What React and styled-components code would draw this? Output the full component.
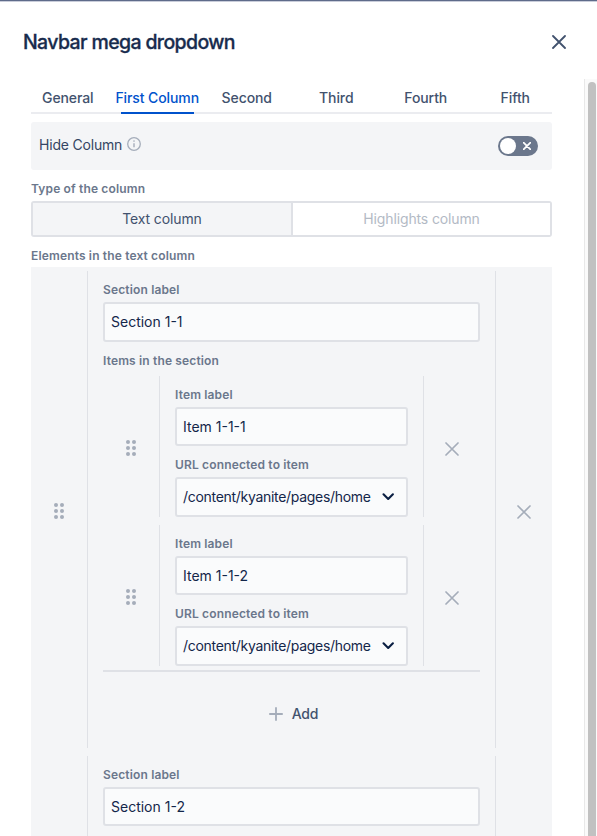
import React from "react";
import styled, { createGlobalStyle } from "styled-components";

const GlobalStyle = createGlobalStyle`
  * { box-sizing: border-box; }
  html, body { margin: 0; padding: 0; overflow: hidden; }
  body { background: #fff; font-family: Inter, "Liberation Sans", sans-serif; }
`;

const Dialog = styled.main`
  height: 836px;
  display: flex;
  flex-direction: column;
  overflow: hidden;
  border-top: 1px solid #5e6b8a;
  box-shadow: inset 0 1px 0 #c9cdda;
`;

const Header = styled.header`
  flex: none;
  height: 78px;
  padding: 3px 31px 0 23px;
  display: flex;
  align-items: center;
  justify-content: space-between;
`;

const Title = styled.h1`
  margin: 0;
  padding-top: 1px;
  font-size: 19.5px;
  line-height: 24px;
  font-weight: 500;
  letter-spacing: -0.63px;
  color: #172b4d;
  -webkit-text-stroke: 0.3px #172b4d;
`;

const IconButton = styled.button`
  border: 0;
  padding: 0;
  background: none;
  display: flex;
  color: ${(p) => p.$color || "#a5adba"};
`;

const Body = styled.div`
  flex: 1;
  min-height: 0;
  display: flex;
  justify-content: space-between;
`;

const Content = styled.div`
  width: 521px;
  margin-left: 31px;
`;

const ScrollTrack = styled.div`
  width: 13px;
  padding: 3px 1px 0 3px;
  background: #fafafa;
  border-left: 1px solid #e8e8e8;
`;

const ScrollThumb = styled.div`
  width: 8px;
  height: 100%;
  border-radius: 4px 4px 0 0;
  background: #c1c1c1;
`;

const Tabs = styled.nav`
  display: grid;
  grid-template-columns: repeat(6, 89.5px);
  margin: 0 -8px;
  height: 35px;
  background: linear-gradient(#ebecf0, #ebecf0) 8px 100% / 521px 2px no-repeat;
`;

const Tab = styled.button`
  border: 0;
  padding: 9px 0 0;
  margin: 0 8px;
  background: none;
  font: 500 14px/20px Inter, sans-serif;
  letter-spacing: -0.1px;
  white-space: nowrap;
  display: flex;
  justify-content: center;
  color: ${(p) => (p.$active ? "#0052cc" : "#42526e")};
  border-bottom: 2px solid ${(p) => (p.$active ? "#0052cc" : "transparent")};
`;

const TogglePanel = styled.div`
  margin-top: 8px;
  height: 48px;
  padding: 0 14px 0 8px;
  border-radius: 3px;
  background: #f4f5f7;
  display: flex;
  align-items: center;
  justify-content: space-between;
`;

const ToggleLabel = styled.span`
  display: flex;
  align-items: center;
  gap: 5px;
  font-size: 14px;
  line-height: 20px;
  letter-spacing: -0.2px;
  color: #344563;
  padding-bottom: 2px;
`;

const InfoIcon = styled.svg`
  margin-bottom: 2px;
`;

const Switch = styled.span`
  width: 40px;
  height: 20px;
  border-radius: 10px;
  padding: 2px 7px 2px 2px;
  background: #6b778c;
  display: flex;
  align-items: center;
  justify-content: space-between;
`;

const Knob = styled.span`
  width: 16px;
  height: 16px;
  border-radius: 50%;
  background: #fff;
`;

const Label = styled.div`
  padding-top: 11px;
  height: ${(p) => (p.$tight ? 30 : 31)}px;
  font-size: 12px;
  line-height: 16px;
  font-weight: 600;
  letter-spacing: 0.15px;
  white-space: nowrap;
  color: #6b778c;
`;

const Segments = styled.div`
  display: grid;
  grid-template-columns: 260px 1fr;
  height: 36px;
  border: 2px solid #dfe1e6;
  border-radius: 3px;
`;

const Segment = styled.button`
  border: 0;
  border-right: ${(p) => (p.$active ? "2px solid #dfe1e6" : "0")};
  padding: 0;
  font: 400 14px/20px Inter, sans-serif;
  letter-spacing: -0.13px;
  background: ${(p) => (p.$active ? "#f4f5f7" : "#fff")};
  color: ${(p) => (p.$active ? "#42526e" : "#b3bac5")};
`;

const List = styled.div`
  background: ${(p) => (p.$nested ? "transparent" : "#f4f5f7")};
  padding-top: 4px;
  border-bottom: ${(p) => (p.$nested ? "2px solid #dfe1e6" : "0")};
`;

const Row = styled.div`
  display: grid;
  grid-template-columns: 56px 1fr 56px;
  height: ${(p) => p.$height}px;
  margin-bottom: ${(p) => p.$gap}px;
`;

const Side = styled.div`
  display: flex;
  align-items: center;
  justify-content: center;
  padding-top: ${(p) => p.$shift}px;
`;

const RowBody = styled.div`
  border: solid #dfe1e6;
  border-width: 0 1px;
  padding: 0 15px;
`;

const Field = styled.div`
  height: 70.5px;
`;

const Input = styled.div`
  height: 39.5px;
  border: 2px solid #dfe1e6;
  border-radius: 3px;
  background: #fafbfc;
  padding: 0.7px 11px 0 6px;
  display: flex;
  align-items: center;
  justify-content: space-between;
  font-size: 14px;
  line-height: 20px;
  white-space: nowrap;
  letter-spacing: ${(p) => p.$tracking || 0}px;
  color: #13264a;
`;

const AddButton = styled.button`
  width: 100%;
  height: 76px;
  border: 0;
  padding: 9px 0 0;
  background: none;
  display: flex;
  align-items: center;
  justify-content: center;
  gap: 9px;
  font: 500 14px/20px Inter, sans-serif;
  letter-spacing: -0.2px;
  color: #42526e;
`;

const AddIcon = styled.svg`
  margin-left: 4px;
`;

const Cross = ({ size = 14, width = 1.7 }) => (
  <svg width={size} height={size} viewBox="0 0 14 14" fill="none" stroke="currentColor" strokeWidth={width} strokeLinecap="round">
    <path d="M1 1l12 12M13 1L1 13" />
  </svg>
);

const DragDots = () => (
  <svg width="12" height="16" viewBox="0 0 12 16" fill="#a5adba">
    {[2, 8, 14].map((y) => (
      <g key={y}>
        <circle cx="3" cy={y} r="2" />
        <circle cx="9" cy={y} r="2" />
      </g>
    ))}
  </svg>
);

const Chevron = () => (
  <svg width="13" height="10" viewBox="0 0 13 10" fill="none" stroke="#091e42" strokeWidth="2.1" strokeLinecap="round" strokeLinejoin="round">
    <path d="M1.5 2.3l4.7 4.6 4.7-4.6" />
  </svg>
);

const TextField = ({ label, value }) => (
  <Field>
    <Label>{label}</Label>
    <Input>{value}</Input>
  </Field>
);

const SelectField = ({ label, value }) => (
  <Field>
    <Label>{label}</Label>
    <Input $tracking={-0.3}>
      {value}
      <Chevron />
    </Input>
  </Field>
);

const Sortable = ({ height, gap, shift, children }) => (
  <Row $height={height} $gap={gap}>
    <Side $shift={shift}><DragDots /></Side>
    <RowBody>{children}</RowBody>
    <Side $shift={shift + 2}><IconButton aria-label="Remove"><Cross /></IconButton></Side>
  </Row>
);

const sections = [
  { label: "Section 1-1", items: ["Item 1-1-1", "Item 1-1-2"] },
  { label: "Section 1-2", items: [] },
];

const tabs = ["General", "First Column", "Second", "Third", "Fourth", "Fifth"];

const SectionItems = ({ items }) => (
  <>
    <Label $tight>Items in the section</Label>
    <List $nested>
      {items.map((item, i) => (
        <Sortable key={item} height={141} gap={i === items.length - 1 ? 4 : 8} shift={3}>
          <TextField label="Item label" value={item} />
          <SelectField label="URL connected to item" value="/content/kyanite/pages/home" />
        </Sortable>
      ))}
    </List>
    <AddButton>
      <AddIcon width="14" height="14" viewBox="0 0 14 14" fill="none" stroke="#a5adba" strokeWidth="1.8" strokeLinecap="round">
        <path d="M7 .9v12.2M.9 7h12.2" />
      </AddIcon>
      Add
    </AddButton>
  </>
);

export default function App() {
  return (
    <>
      <GlobalStyle />
      <Dialog>
        <Header>
          <Title>Navbar mega dropdown</Title>
          <IconButton $color="#42526e" aria-label="Close"><Cross width={1.8} /></IconButton>
        </Header>
        <Body>
          <Content>
            <Tabs>
              {tabs.map((tab, i) => (
                <Tab key={tab} $active={i === 1}>{tab}</Tab>
              ))}
            </Tabs>
            <TogglePanel>
              <ToggleLabel>
                Hide Column
                <InfoIcon width="14" height="14" viewBox="0 0 14 14" fill="none" stroke="#a5adba">
                  <circle cx="7" cy="7" r="6.3" strokeWidth="1.3" />
                  <path d="M7 6.2v4" strokeWidth="1.4" />
                  <circle cx="7" cy="4.1" r="0.8" fill="#a5adba" stroke="none" />
                </InfoIcon>
              </ToggleLabel>
              <Switch>
                <Knob />
                <IconButton $color="#fff" as="span"><Cross size={8} width={3} /></IconButton>
              </Switch>
            </TogglePanel>
            <Label>Type of the column</Label>
            <Segments>
              <Segment $active>Text column</Segment>
              <Segment>Highlights column</Segment>
            </Segments>
            <Label $tight>Elements in the text column</Label>
            <List>
              {sections.map((section) => (
                <Sortable key={section.label} height={476.5} gap={8} shift={3}>
                  <TextField label="Section label" value={section.label} />
                  {section.items.length > 0 && <SectionItems items={section.items} />}
                </Sortable>
              ))}
            </List>
          </Content>
          <ScrollTrack><ScrollThumb /></ScrollTrack>
        </Body>
      </Dialog>
    </>
  );
}
